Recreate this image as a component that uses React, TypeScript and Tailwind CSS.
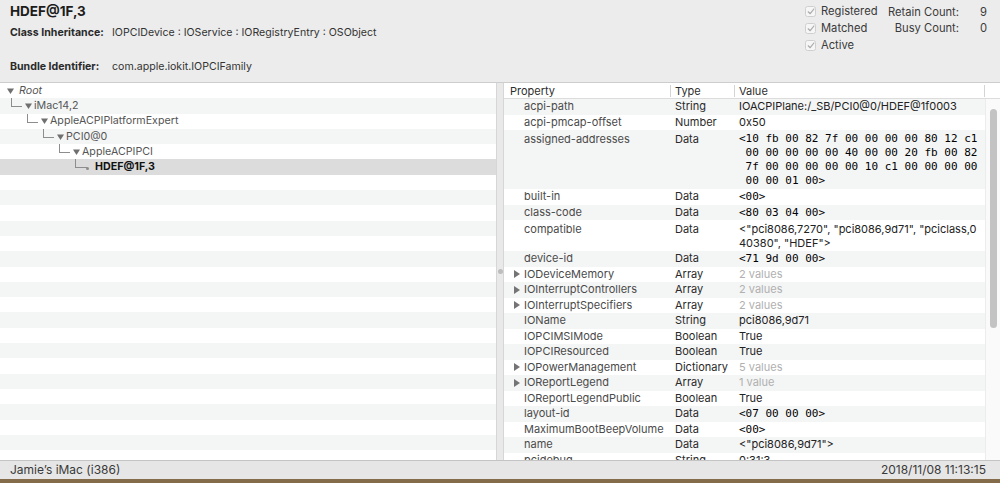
import React from 'react';

type TreeNode = {
  label: string;
  level: number;
  italic?: boolean;
  selected?: boolean;
  leaf?: boolean;
};

type PropRow = {
  name: string;
  type: string;
  value: string[];
  kind: 'text' | 'mono' | 'muted';
  expandable?: boolean;
};

const TREE: TreeNode[] = [
  { label: 'Root', level: 0, italic: true },
  { label: 'iMac14,2', level: 1 },
  { label: 'AppleACPIPlatformExpert', level: 2 },
  { label: 'PCI0@0', level: 3 },
  { label: 'AppleACPIPCI', level: 4 },
  { label: 'HDEF@1F,3', level: 5, selected: true, leaf: true },
];

// indent before the connector, per tree level
const INDENT = ['', 'w-[4px]', 'w-[20px]', 'w-[36px]', 'w-[52px]', 'w-[68px]'];

const ROWS: PropRow[] = [
  { name: 'acpi-path', type: 'String', value: ['IOACPIPlane:/_SB/PCI0@0/HDEF@1f0003'], kind: 'text' },
  { name: 'acpi-pmcap-offset', type: 'Number', value: ['0x50'], kind: 'text' },
  {
    name: 'assigned-addresses',
    type: 'Data',
    value: [
      '<10 fb 00 82 7f 00 00 00 00 80 12 c1',
      ' 00 00 00 00 00 40 00 00 20 fb 00 82',
      ' 7f 00 00 00 00 00 10 c1 00 00 00 00',
      ' 00 00 01 00>',
    ],
    kind: 'mono',
  },
  { name: 'built-in', type: 'Data', value: ['<00>'], kind: 'mono' },
  { name: 'class-code', type: 'Data', value: ['<80 03 04 00>'], kind: 'mono' },
  {
    name: 'compatible',
    type: 'Data',
    value: ['<"pci8086,7270", "pci8086,9d71", "pciclass,0', '40380", "HDEF">'],
    kind: 'text',
  },
  { name: 'device-id', type: 'Data', value: ['<71 9d 00 00>'], kind: 'mono' },
  { name: 'IODeviceMemory', type: 'Array', value: ['2 values'], kind: 'muted', expandable: true },
  { name: 'IOInterruptControllers', type: 'Array', value: ['2 values'], kind: 'muted', expandable: true },
  { name: 'IOInterruptSpecifiers', type: 'Array', value: ['2 values'], kind: 'muted', expandable: true },
  { name: 'IOName', type: 'String', value: ['pci8086,9d71'], kind: 'text' },
  { name: 'IOPCIMSIMode', type: 'Boolean', value: ['True'], kind: 'text' },
  { name: 'IOPCIResourced', type: 'Boolean', value: ['True'], kind: 'text' },
  { name: 'IOPowerManagement', type: 'Dictionary', value: ['5 values'], kind: 'muted', expandable: true },
  { name: 'IOReportLegend', type: 'Array', value: ['1 value'], kind: 'muted', expandable: true },
  { name: 'IOReportLegendPublic', type: 'Boolean', value: ['True'], kind: 'text' },
  { name: 'layout-id', type: 'Data', value: ['<07 00 00 00>'], kind: 'mono' },
  { name: 'MaximumBootBeepVolume', type: 'Data', value: ['<00>'], kind: 'mono' },
  { name: 'name', type: 'Data', value: ['<"pci8086,9d71">'], kind: 'text' },
  { name: 'pcidebug', type: 'String', value: ['0:31:3'], kind: 'text' },
];

function DownTriangle() {
  return (
    <svg width="7" height="6" viewBox="0 0 7 6" className="shrink-0">
      <path d="M0 0.5h7L3.5 6z" fill="#6f6f6f" />
    </svg>
  );
}

function RightTriangle() {
  return (
    <svg width="6" height="8" viewBox="0 0 6 8" className="shrink-0">
      <path d="M0 0l6 4-6 4z" fill="#747474" />
    </svg>
  );
}

function Check({ label }: { label: string }) {
  return (
    <div className="flex items-center h-[16.7px]">
      <div className="w-[11px] h-[11px] rounded-[2.5px] border border-[#cfcfcf] bg-[#f6f6f6] flex items-center justify-center">
        <svg width="8" height="7" viewBox="0 0 8 7">
          <path d="M1.2 3.8L3.2 5.7L6.9 1" stroke="#a9a9a9" strokeWidth="1.2" fill="none" strokeLinecap="round" strokeLinejoin="round" />
        </svg>
      </div>
      <span className="ml-[5px] whitespace-nowrap">{label}</span>
    </div>
  );
}

function TreeRow({ node, index }: { node?: TreeNode; index: number }) {
  const bg = node?.selected ? 'bg-[#dcdcdc]' : index % 2 === 0 ? 'bg-white' : 'bg-[#f4f5f5]';
  return (
    <div className={`h-[15.3px] shrink-0 flex items-center pl-[7px] text-[10.7px] ${bg}`}>
      {node && node.level === 0 && (
        <>
          <DownTriangle />
          <span className="ml-[5px] italic text-[#555]">{node.label}</span>
        </>
      )}
      {node && node.level > 0 && (
        <>
          <div className={`${INDENT[node.level]} shrink-0`} />
          {node.leaf ? (
            <>
              <div className="self-start w-[12px] h-[9px] border-l border-b border-[#8d8d8d] shrink-0" />
              <div className="w-[3px] h-[3px] rounded-full bg-[#8d8d8d] mt-[3px] -ml-[1px] shrink-0" />
              <span className="ml-[6px] font-bold text-[#111]">{node.label}</span>
            </>
          ) : (
            <>
              <div className="self-start w-[11px] h-[9px] border-l border-b border-[#8d8d8d] shrink-0" />
              <div className="ml-[3px]">
                <DownTriangle />
              </div>
              <span className="ml-[2px] text-[#555]">{node.label}</span>
            </>
          )}
        </>
      )}
    </div>
  );
}

function PropertyRow({ row, index }: { row: PropRow; index: number }) {
  const bg = index % 2 === 0 ? 'bg-[#f4f5f5]' : 'bg-white';
  const multi = row.value.length > 1;
  const valueClass =
    row.kind === 'mono'
      ? "font-['DejaVu_Sans_Mono',monospace] text-[11px] text-[#000] whitespace-pre"
      : row.kind === 'muted'
        ? 'text-[#b0b0b0] whitespace-pre'
        : 'text-[#222] whitespace-pre';
  return (
    <div
      className={`flex shrink-0 ${bg} ${
        multi ? 'pt-[2px] pb-[1px] leading-[14px]' : 'h-[15.5px] leading-[15.5px]'
      }`}
    >
      <div className="w-[167px] shrink-0 flex pl-[10px]">
        <div className={`w-[10px] shrink-0 flex ${multi ? 'pt-[3px]' : 'items-center'}`}>
          {row.expandable && <RightTriangle />}
        </div>
        <span className="text-[#4a4a4a] whitespace-nowrap">{row.name}</span>
      </div>
      <div className="w-[64px] shrink-0 pl-[4px] text-[#2a2a2a]">{row.type}</div>
      <div className="flex-1 pl-[4px] flex flex-col">
        {row.value.map((line, i) => (
          <span key={i} className={valueClass}>
            {line}
          </span>
        ))}
      </div>
    </div>
  );
}

export default function App() {
  const treeRows = Array.from({ length: 26 }, (_, i) => i);

  return (
    <div className="w-[1000px] h-[483px] overflow-hidden flex flex-col bg-[#846c4a] font-['Inter','Noto_Sans',sans-serif]">
      <div className="h-[479px] flex flex-col bg-[#ececec]">
        {/* Header */}
        <div className="h-[82px] shrink-0 flex justify-between">
          <div className="pl-[10px] pt-[3px]">
            <div className="h-[16px] leading-[16px] text-[13.5px] font-bold text-[#1c1c1c]">HDEF@1F,3</div>
            <div className="mt-[7px] flex leading-[14px] text-[10.6px]">
              <span className="w-[102px] font-bold text-[#2a2a2a] whitespace-nowrap">Class Inheritance:</span>
              <span className="text-[#333]">IOPCIDevice : IOService : IORegistryEntry : OSObject</span>
            </div>
            <div className="mt-[20px] flex leading-[14px] text-[10.6px]">
              <span className="w-[102px] font-bold text-[#2a2a2a] whitespace-nowrap">Bundle Identifier:</span>
              <span className="text-[#333]">com.apple.iokit.IOPCIFamily</span>
            </div>
          </div>
          <div className="pt-[3.5px] pr-[13px] flex text-[11.2px] text-[#3a3a3a]">
            <div className="w-[87px] flex flex-col">
              <Check label="Registered" />
              <Check label="Matched" />
              <Check label="Active" />
            </div>
            <div className="w-[67px] flex flex-col items-end">
              <span className="h-[16.7px] leading-[16.7px] whitespace-nowrap">Retain Count:</span>
              <span className="h-[16.7px] leading-[16.7px] whitespace-nowrap">Busy Count:</span>
            </div>
            <div className="pl-[21px] w-[28px] flex flex-col">
              <span className="h-[16.7px] leading-[16.7px]">9</span>
              <span className="h-[16.7px] leading-[16.7px]">0</span>
            </div>
          </div>
        </div>

        {/* Panes */}
        <div className="flex-1 min-h-0 flex border-t border-[#cdcdcd]">
          {/* Tree */}
          <div className="w-[496px] shrink-0 flex flex-col overflow-hidden bg-white">
            {treeRows.map((i) => (
              <TreeRow key={i} index={i} node={TREE[i]} />
            ))}
          </div>

          {/* Splitter */}
          <div className="w-[8px] shrink-0 bg-[#e9e9e9] border-l border-r border-[#d6d6d6] flex items-center justify-center">
            <div className="w-[5px] h-[5px] rounded-full bg-[#bdbdbd]" />
          </div>

          {/* Properties table */}
          <div className="flex-1 min-w-0 flex flex-col bg-white text-[11px]">
            <div className="h-[16px] shrink-0 flex items-center border-b border-[#dcdcdc] text-[#2e2e2e]">
              <div className="w-[167px] shrink-0 pl-[6px] h-[12px] leading-[12px] border-r border-[#d4d4d4]">Property</div>
              <div className="w-[64px] shrink-0 pl-[4px] h-[12px] leading-[12px] border-r border-[#d4d4d4]">Type</div>
              <div className="flex-1 pl-[4px] h-[12px] leading-[12px] border-r border-[#d4d4d4]">Value</div>
              <div className="w-[15px] shrink-0" />
            </div>
            <div className="flex-1 min-h-0 flex">
              <div className="flex-1 min-w-0 flex flex-col overflow-hidden">
                {ROWS.map((row, i) => (
                  <PropertyRow key={row.name} row={row} index={i} />
                ))}
              </div>
              <div className="w-[15px] shrink-0 bg-[#fafafa] border-l border-[#ececec] flex justify-center">
                <div className="mt-[10px] w-[7px] h-[219px] rounded-full bg-[#c3c3c3]" />
              </div>
            </div>
          </div>
        </div>

        {/* Status bar */}
        <div className="h-[19px] shrink-0 flex items-center justify-between border-t border-[#c4c4c4] bg-[#e6e6e6] px-[10px] text-[12px] text-[#3a3a3a]">
          <span>Jamie’s iMac (i386)</span>
          <span className="pr-[4px]">2018/11/08 11:13:15</span>
        </div>
      </div>
    </div>
  );
}
